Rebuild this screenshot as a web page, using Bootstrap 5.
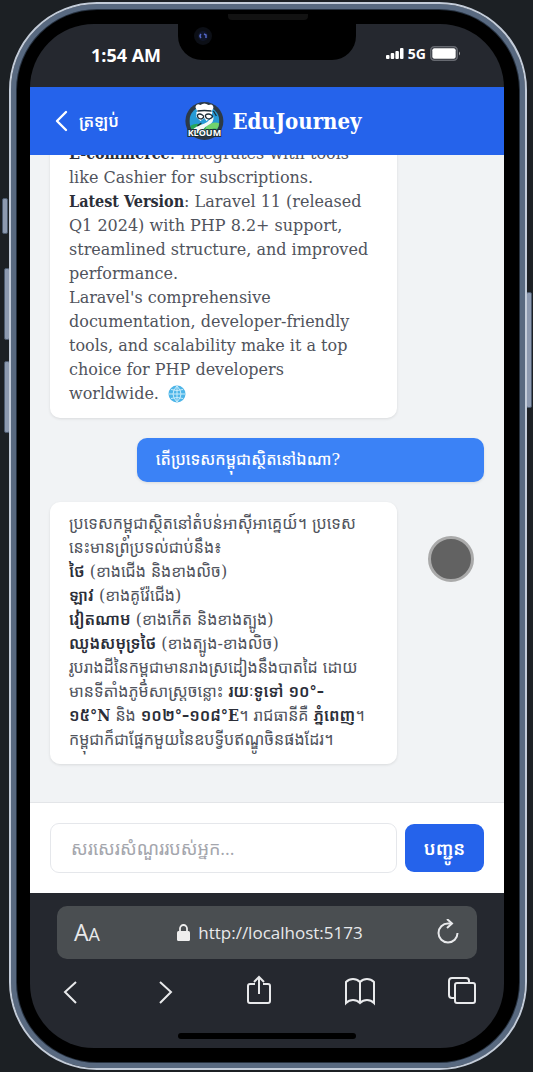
<!DOCTYPE html>
<html lang="km">
<head>
<meta charset="utf-8">
<meta name="viewport" content="width=device-width, initial-scale=1">
<title>EduJourney</title>
<link href="https://cdn.jsdelivr.net/npm/bootstrap@5.3.0/dist/css/bootstrap.min.css" rel="stylesheet">
<style>
  body { background: #1c2024; font-family: "Open Sans", "Noto Sans Khmer", "Khmer OS", sans-serif; }
  .stage { min-height: 100vh; padding: 2px 6px 2px 9px; }
  .phone { border-radius: 88px; background: #000; border: 2px solid #c3ccd9; box-shadow: inset 0 0 0 5px #586980, inset 0 0 0 6px #26313f; padding: 20px 21px 20px 19px; }
  .side-key { position: absolute; width: 6px; background: #8d9ab0; border: 1px solid #4c5a6e; border-radius: 2px; }
  .key-mute { left: 2px; top: 198px; height: 36px; }
  .key-up { left: 4px; top: 268px; height: 72px; }
  .key-down { left: 4px; top: 361px; height: 72px; }
  .key-power { right: 1px; top: 292px; height: 116px; }
  .screen { border-radius: 64px; overflow: hidden; background: #25282f; }
  .status-row { height: 63px; padding: 0 43px 0 61px; color: #fff; font-weight: 700; }
  .clock-text { font-size: 18px; line-height: 26px; padding-bottom: 2px; }
  .net-text { font-size: 14px; line-height: 20px; }
  .notch { position: absolute; top: 0; left: 50%; transform: translateX(-50%); width: 178px; height: 36px; background: #000; border-radius: 0 0 24px 24px; }
  .lens { position: absolute; left: 16px; top: 3px; width: 18px; height: 18px; border-radius: 50%; background: #0c0f16; }
  .speaker { position: absolute; left: 50%; top: 10px; transform: translateX(-50%); width: 80px; height: 6px; background: #121212; border-radius: 0 0 4px 4px; }
  .app-head { height: 68px; background: #2563eb; padding: 0 25px; color: #fff; }
  .back-link { color: #fff; font-size: 16px; font-weight: 600; gap: 10px; }
  .brand-group { position: absolute; left: 50%; top: 50%; transform: translate(-50%, -50%); margin-left: 6px; }
  .slab { font-family: "Roboto Slab", "DejaVu Serif", "Noto Sans Khmer", serif; }
  .slab-narrow, .msg-bot b { font-family: "Roboto Slab", "DejaVu Serif Condensed", "DejaVu Serif", "Noto Sans Khmer", serif; }
  .brand-name { font-size: 22px; line-height: 28px; font-weight: 700; }
  .logo-text { font: 700 9px "Open Sans", sans-serif; }
  .chat { background: #f1f3f5; padding: 0 20px 38px; height: 0; min-height: 0; gap: 20px; overflow: hidden; }
  .msg { border-radius: 10px; width: 80%; padding: 10px 19px 12px; font-size: 16px; line-height: 24px; flex-shrink: 0; white-space: nowrap; box-shadow: 0 1px 3px #0000001a; }
  .msg-bot { background: #fff; color: #50535c; }
  .msg-bot b { color: #2b2e38; font-weight: 600; }
  .msg-user { background: #3b82f6; color: #fff; padding: 10px 19px; font-weight: 500; }
  .touch-dot { position: absolute; right: 30px; top: 381px; width: 46px; height: 46px; border-radius: 50%; background: #626262; border: 3px solid #aaa; }
  .composer { background: #fff; border-top: 1px solid #e3e5e8; padding: 20px; }
  .ask-input { height: 50px; border: 1px solid #e5e7eb; border-radius: 9px; padding: 0 20px; font-size: 18px; min-width: 0; }
  .ask-input::placeholder { color: #a4a6ad; opacity: 1; }
  .send-btn { width: 79px; height: 48px; background: #2563eb; color: #fff; border-radius: 9px; font-size: 18px; font-weight: 600; padding: 0; white-space: nowrap; }
  .send-btn:hover { background: #1d4ed8; color: #fff; }
  .safari { padding: 13px 27px 9px; color: #e8e9eb; }
  .url-bar { height: 53px; border-radius: 10px; background: #4a4e51; padding: 0 17px; }
  .url-text { font-size: 17px; line-height: 24px; padding-left: 4px; }
  .aa-btn, .tool-btn { background: none; border: 0; padding: 0; color: #e8e9eb; line-height: 1; display: flex; align-items: center; }
  .aa-btn { align-items: baseline; }
  .aa-big { font-size: 23px; }
  .aa-small { font-size: 18px; }
  .tools { padding: 16px 0 0; height: 68px; }
  .home-bar { width: 178px; height: 6px; border-radius: 3px; background: #000; margin-top: 6px; }
  svg { display: block; }
</style>
</head>
<body>
<div class="stage d-flex flex-column position-relative">
  <span class="side-key key-mute"></span><span class="side-key key-up"></span><span class="side-key key-down"></span><span class="side-key key-power"></span>
  <div class="phone d-flex flex-column flex-grow-1 position-relative">
    <div class="speaker"></div>
    <div class="screen d-flex flex-column flex-grow-1">
      <div class="status-row d-flex align-items-center justify-content-between position-relative">
        <span class="clock-text">1:54 AM</span>
        <div class="notch"><span class="lens"><svg width="18" height="18" viewBox="0 0 18 18"><circle cx="9" cy="9" r="5" fill="#10162a"/><path d="M7 7q-2 2 0 4M10 7l2 1v3" stroke="#5266c4" stroke-width="1.5" fill="none"/></svg></span></div>
        <div class="d-flex align-items-center gap-1 pb-1">
          <svg width="18" height="13" viewBox="0 0 18 13" fill="#fff"><rect x="0" y="8" width="3.5" height="4" rx="1"/><rect x="4.7" y="6" width="3.5" height="6" rx="1"/><rect x="9.4" y="4" width="3.5" height="8" rx="1"/><rect x="14" y="1" width="3.5" height="11" rx="1"/></svg>
          <span class="net-text">5G</span>
          <svg width="31" height="15" viewBox="0 0 31 15"><rect x=".8" y=".8" width="26.4" height="13.4" rx="3.5" fill="none" stroke="#666970" stroke-width="1.5"/><rect x="2.3" y="2.3" width="23.4" height="10.4" rx="2" fill="#fff"/><path d="M29 5.5q2 2 0 4z" fill="#aaa"/></svg>
        </div>
      </div>
      <header class="app-head d-flex align-items-center position-relative">
        <a href="#" class="back-link d-flex align-items-center text-decoration-none"><svg width="14" height="22" viewBox="0 0 14 22" fill="none" stroke="#fff" stroke-width="2.4" stroke-linecap="round" stroke-linejoin="round"><path d="M11 2 2 11l9 9"/></svg><span>ត្រឡប់</span></a>
        <div class="brand-group d-flex align-items-center gap-2">
          <svg width="40" height="40" viewBox="0 0 40 40">
            <defs><clipPath id="disc"><circle cx="20" cy="20" r="15"/></clipPath></defs>
            <circle cx="20" cy="20" r="19" fill="#2d3a46"/>
            <g clip-path="url(#disc)"><rect x="5" y="5" width="30" height="30" fill="#259ad6"/><path d="M4 26Q12 20 20 25t16-3v16H4z" fill="#26a657"/><path d="M22 25q8-6 14-2v6q-8-4-16 2z" fill="#72d26d"/></g>
            <path d="M27 16q-2 5-11 8t-8 8h10q0-5 6-8t5-8z" fill="#f3f8f7"/>
            <path d="M11 6q1-4 5-2 4-3 8 0 5-2 5 3l-2 4H13z" fill="#fff"/>
            <path d="M12 11h16l-1 5-5 4-2-3-4 3-4-4z" fill="#fff"/>
            <path d="M13 10q7-1 14 0M13 14q2-2 5 0t-1 4q-4 0-4-4M21 14q3-2 6 0t-2 4q-4 0-4-4M29 10l3 5M17 22l-4 3" stroke="#1d2e38" stroke-width="1.3" fill="none"/>
            <text class="logo-text" x="20" y="35" text-anchor="middle" fill="#fff" stroke="#1d2e38" stroke-width="2" paint-order="stroke">KLOUM</text>
          </svg>
          <span class="brand-name slab-narrow">EduJourney</span>
        </div>
      </header>
      <main class="chat slab d-flex flex-column justify-content-end flex-grow-1 position-relative">
        <div class="msg msg-bot"><b>E-commerce</b>: Integrates with tools<br>like Cashier for subscriptions.<br><b>Latest Version</b>: Laravel 11 (released<br>Q1 2024) with PHP 8.2+ support,<br>streamlined structure, and improved<br>performance.<br>Laravel's comprehensive<br>documentation, developer-friendly<br>tools, and scalability make it a top<br>choice for PHP developers<br>worldwide. <svg class="d-inline-block align-text-bottom ms-1" width="18" height="18" viewBox="0 0 18 18" role="img" aria-label="globe"><circle cx="9" cy="9" r="8.5" fill="#4db5e8"/><path d="M9 1v16M1 9h16M3 4.500q6 2 12 0M3 13.500q6-2 12 0M9 1q-8 8 0 16M9 1q8 8 0 16" stroke="#c9ecfb" fill="none"/></svg></div>
        <div class="msg msg-user align-self-end">តើប្រទេសកម្ពុជាស្ថិតនៅឯណា?</div>
        <div class="msg msg-bot">ប្រទេសកម្ពុជាស្ថិតនៅតំបន់អាស៊ីអាគ្នេយ៍។ ប្រទេស<br>នេះមានព្រំប្រទល់ជាប់នឹង៖<br><b>ថៃ</b> (ខាងជើង និងខាងលិច)<br><b>ឡាវ</b> (ខាងគូវ៉ែជើង)<br><b>វៀតណាម</b> (ខាងកើត និងខាងត្បូង)<br><b>ឈូងសមុទ្រថៃ</b> (ខាងត្បូង-ខាងលិច)<br>រូបរាងដីនៃកម្ពុជាមានរាងស្រដៀងនឹងបាតដៃ ដោយ<br>មានទីតាំងភូមិសាស្ត្រចន្លោះ <b>រយៈទូទៅ ១០°–</b><br><b>១៥°N</b> និង <b>១០២°–១០៨°E</b>។ រាជធានីគឺ <b>ភ្នំពេញ</b>។<br>កម្ពុជាក៏ជាផ្នែកមួយនៃឧបទ្វីបឥណ្ឌូចិនផងដែរ។</div>
        <span class="touch-dot"></span>
      </main>
      <form class="composer d-flex align-items-center gap-2" onsubmit="return false">
        <input class="ask-input form-control flex-grow-1" type="text" placeholder="សរសេរសំណួររបស់អ្នក..." aria-label="សរសេរសំណួររបស់អ្នក">
        <button class="send-btn btn flex-shrink-0" type="submit">បញ្ជូន</button>
      </form>
      <nav class="safari">
        <div class="url-bar d-flex align-items-center justify-content-between">
          <button class="aa-btn" type="button"><span class="aa-big">A</span><span class="aa-small">A</span></button>
          <span class="url-text d-flex align-items-center gap-2"><svg width="13" height="17" viewBox="0 0 13 17"><rect y="7" width="13" height="10" rx="1.500" fill="#eee"/><path d="M3 8V4.500a3.500 3.500 0 0 1 7 0V8" fill="none" stroke="#eee" stroke-width="1.800"/></svg>http://localhost:5173</span>
          <button class="tool-btn" type="button" aria-label="Reload"><svg width="24" height="28" viewBox="0 0 24 28" fill="none" stroke="currentColor" stroke-width="2"><path d="M21.500 14a9.500 9.500 0 1 1-9.500-9.500h3"/><path d="m11 0 5 4.500-5 4.500"/></svg></button>
        </div>
        <div class="tools d-flex justify-content-between align-items-start">
          <button class="tool-btn ms-1" type="button" aria-label="Back"><svg width="24" height="34" viewBox="0 0 24 34" fill="none" stroke="currentColor" stroke-width="2"><path d="M15 7 4 17l11 11"/></svg></button>
          <button class="tool-btn" type="button" aria-label="Forward"><svg width="18" height="34" viewBox="0 0 18 34" fill="none" stroke="currentColor" stroke-width="2"><path d="M3 7l11 10L3 28"/></svg></button>
          <button class="tool-btn" type="button" aria-label="Share"><svg width="26" height="32" viewBox="0 0 26 32" fill="none" stroke="currentColor" stroke-width="2"><path d="M9 9H4q-2 0-2 2v15q0 2 2 2h18q2 0 2-2V11q0-2-2-2h-5M13 19V2M8 7l5-5 5 5"/></svg></button>
          <button class="tool-btn" type="button" aria-label="Bookmarks"><svg width="32" height="34" viewBox="0 0 32 34" fill="none" stroke="currentColor" stroke-width="2"><path d="M16 7q-3-3-7-3-4 0-7 3v21q3-3 7-3 4 0 7 3 3-3 7-3 4 0 7 3V7q-3-3-7-3-4 0-7 3v21"/></svg></button>
          <button class="tool-btn" type="button" aria-label="Tabs"><svg width="30" height="32" viewBox="0 0 30 32" fill="none" stroke="currentColor" stroke-width="2"><rect x="8" y="8" width="20" height="20" rx="2"/><path d="M8 23H5q-3 0-3-3V6q0-3 3-3h14q3 0 3 3v2"/></svg></button>
        </div>
        <div class="home-bar mx-auto"></div>
      </nav>
    </div>
  </div>
</div>
<script src="https://cdn.jsdelivr.net/npm/bootstrap@5.3.0/dist/js/bootstrap.bundle.min.js"></script>
</body>
</html>
